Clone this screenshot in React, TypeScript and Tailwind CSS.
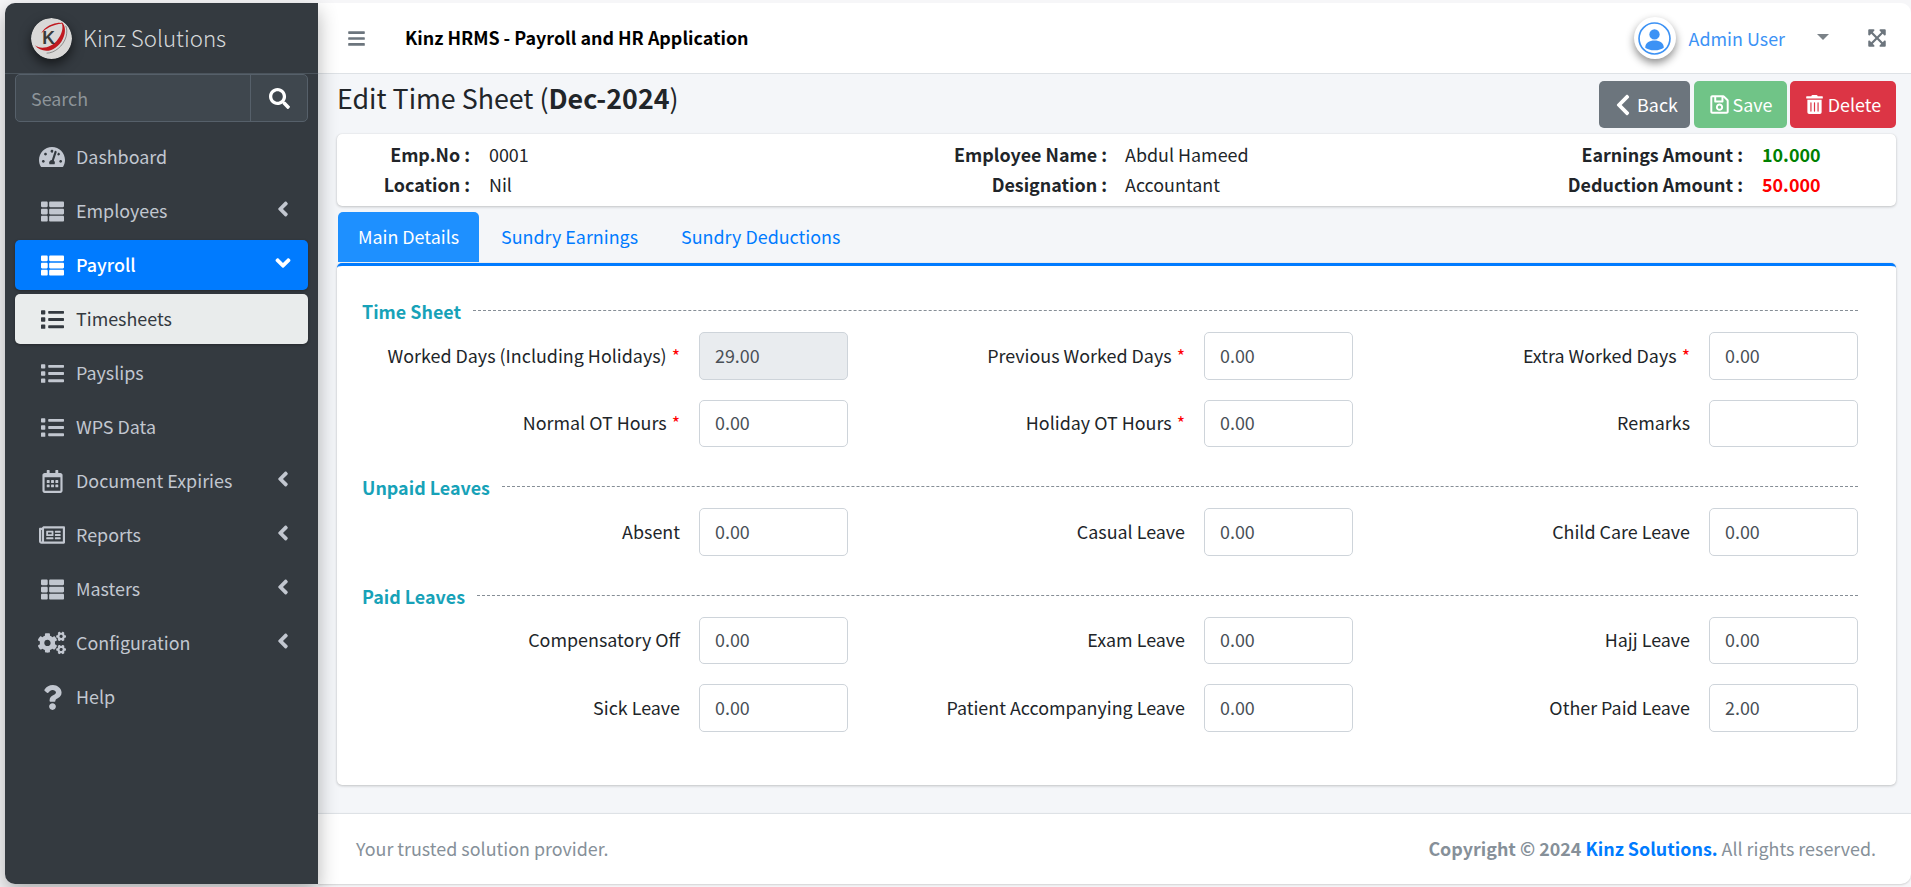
import React from "react";
import {
  FaTachometerAlt, FaThList, FaList, FaRegCalendarAlt, FaRegNewspaper, FaCogs, FaQuestion,
  FaAngleLeft, FaAngleDown, FaSearch, FaBars, FaExpandArrowsAlt, FaRegSave, FaTrashAlt, FaChevronLeft,
} from "react-icons/fa";

const font = "font-['Noto_Sans_CJK_SC','Source_Sans_Pro',sans-serif]";

function Logo() {
  return (
    <svg viewBox="0 0 42 42" className="w-[41px] h-[41px] rounded-full shadow-[0_5px_12px_rgba(0,0,0,0.6)]">
      <circle cx="21" cy="21" r="21" fill="#d9d8d7" />
      <path d="M4 28C8 33 14 34.500 20 33C27 31 33 24 34.500 16C35.500 10 34 6 31 4C33 8 32.500 13 30 18C27 24 22 28.500 16 30C11 31 7 30.500 4 28z" fill="#c0181f" />
      <path d="M10.500 16C12 11 19 6 27 5C29.500 4.700 31.500 5 33 6C30.500 5.800 28 6 25.500 6.800C19 8.500 13.500 12 10.500 16z" fill="#c0181f" />
      <path d="M16 36C24 36 33 29 36 19C37 15 37 11 35.500 8" fill="none" stroke="#666" strokeWidth="0.7" />
      <text x="18" y="27" textAnchor="middle" fontSize="18" fontWeight="700" fill="#3a3a3a" fontFamily="'Liberation Sans',sans-serif">K</text>
    </svg>
  );
}

function NavItem({ icon, label, arrow, active, sub }: { icon: React.ReactNode; label: string; arrow?: "left" | "down"; active?: boolean; sub?: boolean }) {
  const cls = active
    ? "bg-[#007bff] text-white shadow-[0_1px_3px_rgba(0,0,0,0.3)] font-medium"
    : sub
    ? "bg-[#e9ecec] text-[#343a40] shadow-[0_1px_3px_rgba(0,0,0,0.3)]"
    : "text-[#c2c7d0]";
  return (
    <div className={`h-[50px] rounded-[5px] flex items-center pl-[23px] pr-[16px] text-[17.9px] leading-none ${cls}`}>
      <span className="w-[28px] flex justify-center shrink-0">{icon}</span>
      <span className="ml-[10px] flex-1">{label}</span>
      {arrow === "left" && <FaAngleLeft className="text-[24px] -mr-[3px] -mt-[4px]" />}
      {arrow === "down" && <FaAngleDown className="text-[24px] -mr-[3px] -mt-[4px]" />}
    </div>
  );
}

function Field({ label, value, required, disabled }: { label: string; value: string; required?: boolean; disabled?: boolean }) {
  return (
    <div className="flex items-center justify-end h-[47.5px]">
      <span className="text-[17.9px] leading-none text-[#212529] whitespace-nowrap">
        {label}
        {required && <span className="text-[#ff0000] ml-[5px]">*</span>}
      </span>
      <div className={`ml-[19px] w-[149px] h-[47.5px] shrink-0 border border-[#ced4da] rounded-[5px] px-[15px] flex items-center text-[17.9px] leading-none text-[#495057] ${disabled ? "bg-[#e9ecef]" : "bg-white"}`}>
        {value}
      </div>
    </div>
  );
}

function Section({ title, tight }: { title: string; tight?: boolean }) {
  return (
    <div className={`flex items-center h-[24px] ${tight ? "" : "mt-[29px]"} mb-[8px] ml-[362px]`}>
      <span className="text-[17.9px] font-bold leading-none text-[#17a2b8] whitespace-nowrap">{title}</span>
      <span className="flex-1 ml-[12px] border-t border-dashed border-[#868e96] -mt-[3px]" />
    </div>
  );
}

function InfoCell({ label, value, cls, w, vw }: { label: string; value: string; cls?: string; w: string; vw: string }) {
  return (
    <div className="flex items-center h-[30px] text-[17.9px] leading-none">
      <span className={`${w} shrink-0 text-right font-bold text-[#212529] whitespace-nowrap`}>{label} :</span>
      <span className={`${vw} ${cls ?? "text-[#212529]"} whitespace-nowrap`}>{value}</span>
    </div>
  );
}

export default function App() {
  return (
    <div className={`${font} h-[887px] w-[1911px] overflow-hidden bg-[#f6f6f8] pt-[3px] pl-[5px] pb-[3px] flex`}>
      <aside className="w-[313px] shrink-0 bg-[#343a40] rounded-tl-[10px] rounded-bl-[10px] shadow-[0_8px_20px_rgba(0,0,0,0.3)] relative z-10">
        <div className="h-[71px] border-b border-[#4b545c] flex items-center pl-[26px]">
          <Logo />
          <span className="ml-[11px] -mt-[2px] text-[22.3px] font-light leading-none text-[#d6d8da]">Kinz Solutions</span>
        </div>
        <div className="px-[10px]">
          <div className="h-[48px] flex bg-[#3f474e] border border-[#56606a] rounded-[5px]">
            <span className="flex-1 flex items-center pl-[15px] pt-[2px] text-[17.9px] leading-none text-[#8d9499]">Search</span>
            <span className="w-[57px] border-l border-[#56606a] flex items-center justify-center text-white text-[21px]"><FaSearch /></span>
          </div>
          <nav className="mt-[10px] flex flex-col gap-[4px]">
            <NavItem icon={<FaTachometerAlt className="text-[26px]" />} label="Dashboard" />
            <NavItem icon={<FaThList className="text-[23px]" />} label="Employees" arrow="left" />
            <NavItem icon={<FaThList className="text-[23px]" />} label="Payroll" arrow="down" active />
            <NavItem icon={<FaList className="text-[23px]" />} label="Timesheets" sub />
            <NavItem icon={<FaList className="text-[23px]" />} label="Payslips" />
            <NavItem icon={<FaList className="text-[23px]" />} label="WPS Data" />
            <NavItem icon={<FaRegCalendarAlt className="text-[23px]" />} label="Document Expiries" arrow="left" />
            <NavItem icon={<FaRegNewspaper className="text-[26px]" />} label="Reports" arrow="left" />
            <NavItem icon={<FaThList className="text-[23px]" />} label="Masters" arrow="left" />
            <NavItem icon={<FaCogs className="text-[28px]" />} label="Configuration" arrow="left" />
            <NavItem icon={<FaQuestion className="text-[25px]" />} label="Help" />
          </nav>
        </div>
      </aside>

      <main className="flex-1 flex flex-col min-w-0">
        <header className="h-[71px] bg-white border-b border-[#dee2e6] rounded-tr-[10px] flex items-center pr-[24px] shrink-0">
          <FaBars className="ml-[29px] text-[19px] text-[#6c757d]" />
          <span className="ml-[39px] text-[17.9px] font-bold leading-none text-[#000]">Kinz HRMS - Payroll and HR Application</span>
          <span className="ml-auto w-[42px] h-[42px] rounded-full bg-white shadow-[0_4px_8px_rgba(0,0,0,0.45)] flex items-center justify-center">
            <svg viewBox="0 0 32 32" className="w-[33px] h-[33px]">
              <circle cx="16" cy="16" r="15" fill="none" stroke="#3c92f5" strokeWidth="1.6" />
              <circle cx="16" cy="12" r="5" fill="#3c92f5" />
              <path d="M7 25c0-5 4-7 9-7s9 2 9 7c-2 1.500-5 2.500-9 2.500S9 26.500 7 25z" fill="#3c92f5" />
            </svg>
          </span>
          <span className="ml-[13px] text-[17.9px] leading-none text-[#3c92f5] pt-[2px]">Admin User</span>
          <span className="ml-[32px] -mt-[3px] w-0 h-0 border-l-[6px] border-r-[6px] border-t-[6px] border-l-transparent border-r-transparent border-t-[#7b8288]" />
          <FaExpandArrowsAlt className="ml-[38px] text-[20px] text-[#6c757d]" />
        </header>

        <div className="flex-1 bg-[#f4f6f9] pl-[19px] pr-[15px] min-h-0">
          <div className="flex items-start justify-between h-[60px]">
            <h1 className="text-[26.8px] leading-none text-[#212529] pt-[11px]">
              Edit Time Sheet (<b>Dec-2024</b>)
            </h1>
            <div className="flex pt-[7px] text-[17.9px] leading-none text-white">
              <div className="w-[91px] h-[47px] rounded-[5px] bg-[#6c757d] flex items-center justify-center gap-[2px]"><FaChevronLeft className="text-[24px]" />Back</div>
              <div className="ml-[4px] w-[93px] h-[47px] rounded-[5px] bg-[#70c487] flex items-center justify-center gap-[3px]"><FaRegSave className="text-[21px]" />Save</div>
              <div className="ml-[3px] w-[106px] h-[47px] rounded-[5px] bg-[#dc3545] flex items-center justify-center gap-[4px]"><FaTrashAlt className="text-[19px]" />Delete</div>
            </div>
          </div>

          <div className="h-[72px] bg-white rounded-[5px] shadow-[0_0_1px_rgba(0,0,0,0.13),0_1px_3px_rgba(0,0,0,0.2)] flex py-[6px]">
            <div className="w-[300px]">
              <InfoCell label="Emp.No" value="0001" w="w-[133px]" vw="ml-[19px]" />
              <InfoCell label="Location" value="Nil" w="w-[133px]" vw="ml-[19px]" />
            </div>
            <div className="w-[636px]">
              <InfoCell label="Employee Name" value="Abdul Hameed" w="w-[470px]" vw="ml-[18px]" />
              <InfoCell label="Designation" value="Accountant" w="w-[470px]" vw="ml-[18px]" />
            </div>
            <div className="flex-1">
              <InfoCell label="Earnings Amount" value="10.000" w="w-[470px]" vw="ml-[19px] font-bold" cls="text-[#008000]" />
              <InfoCell label="Deduction Amount" value="50.000" w="w-[470px]" vw="ml-[19px] font-bold" cls="text-[#ff0000]" />
            </div>
          </div>

          <div className="mt-[6px] h-[51px] flex text-[17.9px] leading-none text-[#007bff]">
            <div className="ml-[1px] w-[141px] h-[50px] rounded-t-[5px] bg-[#1e90ff] text-white flex items-center justify-center">Main Details</div>
            <div className="ml-[22px] h-[50px] flex items-center">Sundry Earnings</div>
            <div className="ml-[43px] h-[50px] flex items-center">Sundry Deductions</div>
          </div>

          <div className="h-[522px] bg-white rounded-[5px] border-t-[3px] border-[#007bff] shadow-[0_0_1px_rgba(0,0,0,0.13),0_1px_3px_rgba(0,0,0,0.2)] pt-[34px] pr-[38px]">
            <div className="-ml-[337px]">
              <Section title="Time Sheet" tight />
              <div className="grid grid-cols-3 gap-y-[20px] w-[1515px] ml-auto">
                <Field label="Worked Days (Including Holidays)" value="29.00" required disabled />
                <Field label="Previous Worked Days" value="0.00" required />
                <Field label="Extra Worked Days" value="0.00" required />
                <Field label="Normal OT Hours" value="0.00" required />
                <Field label="Holiday OT Hours" value="0.00" required />
                <Field label="Remarks" value="" />
              </div>
              <Section title="Unpaid Leaves" />
              <div className="grid grid-cols-3 gap-y-[20px] w-[1515px] ml-auto">
                <Field label="Absent" value="0.00" />
                <Field label="Casual Leave" value="0.00" />
                <Field label="Child Care Leave" value="0.00" />
              </div>
              <Section title="Paid Leaves" />
              <div className="grid grid-cols-3 gap-y-[20px] w-[1515px] ml-auto">
                <Field label="Compensatory Off" value="0.00" />
                <Field label="Exam Leave" value="0.00" />
                <Field label="Hajj Leave" value="0.00" />
                <Field label="Sick Leave" value="0.00" />
                <Field label="Patient Accompanying Leave" value="0.00" />
                <Field label="Other Paid Leave" value="2.00" />
              </div>
            </div>
          </div>
        </div>

        <footer className="h-[71px] bg-white border-t border-[#dee2e6] rounded-br-[10px] shadow-[0_1px_2px_rgba(0,0,0,0.15)] flex items-center justify-between pl-[38px] pr-[35px] text-[17.9px] leading-none text-[#869099] shrink-0">
          <span>Your trusted solution provider.</span>
          <span><b>Copyright © 2024 <span className="text-[#007bff]">Kinz Solutions.</span></b> All rights reserved.</span>
        </footer>
      </main>
    </div>
  );
}
